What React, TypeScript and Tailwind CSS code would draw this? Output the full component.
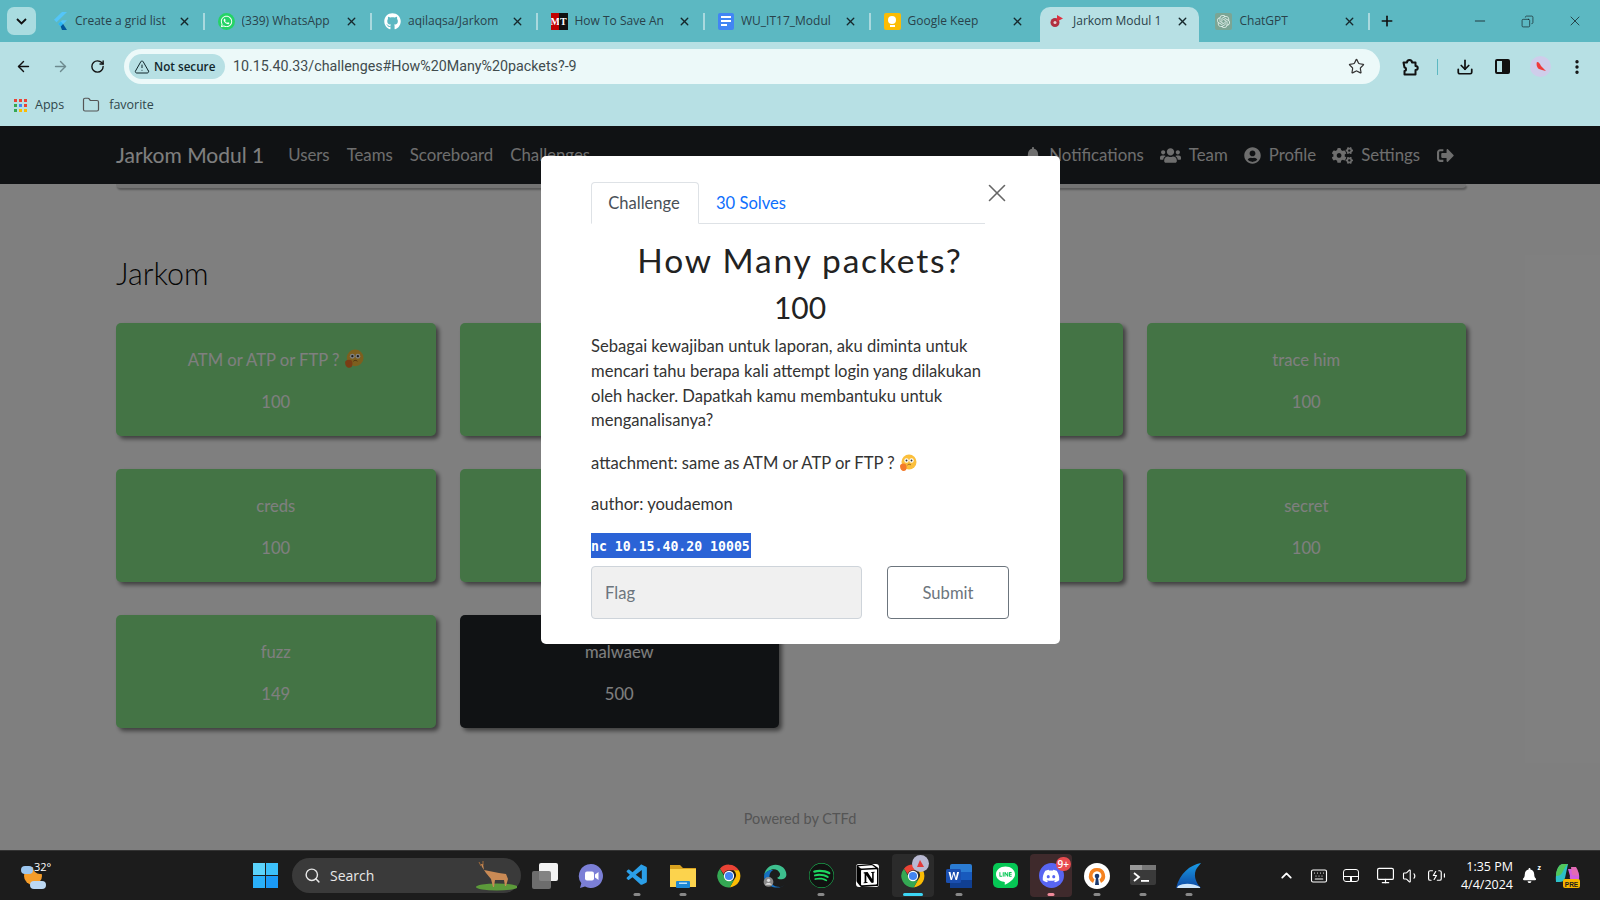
import React from "react";
import { ArrowLeft, ArrowRight, RotateCw, TriangleAlert, Star, Download, MoreVertical, Folder, X, Plus, Minus, Copy, Search, ChevronUp, Keyboard, Volume1, Monitor, BatteryCharging } from "lucide-react";
import { FaBell, FaUsers, FaUserCircle, FaCogs, FaSignOutAlt, FaWhatsapp, FaGithub, FaDiscord, FaSpotify } from "react-icons/fa";
import { SiOpenai, SiNotion, SiLine } from "react-icons/si";
import { VscVscode } from "react-icons/vsc";

const Flutter = () => (
  <svg width="16" height="18" viewBox="0 0 16 18"><path d="M10 0h5L4.5 10.2 2 7.8z" fill="#54c5f8" /><path d="M15 8.3h-5L6.2 12l2.5 2.5z" fill="#54c5f8" /><path d="M6.2 12l2.5-2.4 2.4 2.4-2.4 2.5z" fill="#29b6f6" /><path d="M8.700 14.500L10 18h5l-3.900-6z" fill="#01579b" /></svg>
);
const Wa = () => <span className="w-[17px] h-[17px] rounded-full bg-[#25d366] flex items-center justify-center text-white"><FaWhatsapp size={13} /></span>;
const Gh = () => <span className="w-[17px] h-[17px] rounded-full bg-[#5cb8c2] flex items-center justify-center text-white"><FaGithub size={17} /></span>;
const Mt = () => (
  <span className="w-[17px] h-[17px] flex overflow-hidden text-[10px] font-bold text-white leading-[17px] text-center" style={{ fontFamily: '"Liberation Serif", serif' }}>
    <span className="w-[8.500px] bg-[#c00000]">M</span><span className="w-[8.500px] bg-[#111]">T</span>
  </span>
);
const Docs = () => (
  <span className="w-[16px] h-[17px] rounded-[2px] bg-[#4285f4] flex flex-col justify-center gap-[2px] pl-[3px]">
    <span className="w-[10px] h-[2px] bg-white" /><span className="w-[10px] h-[2px] bg-white" /><span className="w-[6px] h-[2px] bg-white" />
  </span>
);
const Keep = () => (
  <span className="w-[17px] h-[17px] rounded-[2px] bg-[#fbbc04] flex flex-col items-center justify-center gap-[1px]">
    <span className="w-[8px] h-[8px] rounded-full bg-white" /><span className="w-[5px] h-[2px] bg-white" />
  </span>
);
const Ctfd = () => (
  <svg width="16" height="16" viewBox="0 0 16 16"><circle cx="6" cy="9.500" r="4.500" fill="#b03040" /><path d="M8 2l6 3.500-6 3z" fill="#e03040" /><circle cx="6" cy="9.500" r="1.500" fill="#e8d0d0" /></svg>
);
const Gpt = () => <span className="w-[17px] h-[17px] rounded-[2px] bg-[#7ba594] flex items-center justify-center text-[#dfeee9]"><SiOpenai size={13} /></span>;
const Ext = () => (
  <svg width="18" height="18" viewBox="0 0 18 18" className="ml-[21px] shrink-0" fill="none" stroke="#111" strokeWidth="2" strokeLinejoin="round">
    <path d="M2.500 4.500h3.500c0-3.500 5-3.500 5 0h3.500v3.500c3 0 3 4 0 4v4.500h-11v-3.500c2 0 2-3.500 0-3.500z" />
  </svg>
);

const tabs = [
  { t: "Create a grid list", i: <Flutter />, sep: true },
  { t: "(339) WhatsApp", i: <Wa />, sep: true },
  { t: "aqilaqsa/Jarkom", i: <Gh />, sep: true },
  { t: "How To Save An", i: <Mt />, sep: true },
  { t: "WU_IT17_Modul", i: <Docs />, sep: true },
  { t: "Google Keep", i: <Keep />, sep: false },
];

function Tab({ t, i, sep }: { t: string; i: React.ReactNode; sep: boolean }) {
  return (
    <div className="w-[166.500px] h-[42px] flex items-center pl-[10px] shrink-0">
      <span className="w-[17px] h-[18px] flex items-center justify-center shrink-0">{i}</span>
      <span className="w-[92px] ml-[7px] text-[12px] text-[#29424a] whitespace-nowrap overflow-hidden">{t}</span>
      <X size={13} strokeWidth={2.500} className="ml-[11px] text-[#16282c] shrink-0" />
      {sep ? <span className="ml-[12px] w-[2px] h-[17px] bg-[#a9d9de] shrink-0" /> : null}
    </div>
  );
}

const Chrome = ({ s = 26 }: { s?: number }) => (
  <svg width={s} height={s} viewBox="0 0 48 48">
    <path d="M24 3a21 21 0 0 1 18.200 10.500H24a10.500 10.500 0 0 0-9.900 7L7.300 10.700A21 21 0 0 1 24 3z" fill="#ea4335" />
    <path d="M42.200 13.500A21 21 0 0 1 25.300 45l8.900-15.500a10.500 10.500 0 0 0-2-16z" fill="#fbbc04" />
    <path d="M25.300 45A21 21 0 0 1 7.300 10.700l9 15.700A10.500 10.500 0 0 0 34.200 29.500z" fill="#34a853" />
    <circle cx="24" cy="24" r="9.500" fill="#fff" /><circle cx="24" cy="24" r="7.500" fill="#4285f4" />
  </svg>
);
const Edge = () => (
  <svg width="26" height="26" viewBox="0 0 48 48">
    <path d="M4 22C6 10 15 3 25 3c11 0 20 8 20 18 0 6-5 9-10 9-3 0-6-1-7-3 5-1 6-5 5-8-2-6-9-9-15-7C12 14 7 17 4 22z" fill="#3dbf8e" />
    <path d="M4 22c2-6 10-10 17-9-7 3-9 12-6 20 2 6 8 10 14 11 5 1 10-1 13-4-4 4-11 6-18 5C12 44 2 33 4 22z" fill="#1570c0" />
    <circle cx="12" cy="35" r="9" fill="#8a8a8a" /><circle cx="12" cy="32" r="3" fill="#ddd" /><path d="M6 40c1-4 11-4 12 0z" fill="#ddd" />
  </svg>
);
const Explorer = () => (
  <svg width="26" height="26" viewBox="0 0 26 26">
    <path d="M0 2h10l3 3h13v19H0z" fill="#d9a21f" /><rect y="6" width="26" height="18" fill="#fcd34d" /><rect x="6" y="18" width="14" height="7" rx="1" fill="#1e88d4" /><rect x="9" y="19.500" width="8" height="1.500" fill="#bde3fb" />
  </svg>
);
const Word = () => (
  <svg width="26" height="26" viewBox="0 0 26 26">
    <rect x="4" y="1" width="22" height="24" rx="2" fill="#2b7cd3" /><rect x="4" y="9" width="22" height="8" fill="#185abd" /><rect x="4" y="17" width="22" height="8" fill="#103f91" /><rect y="6" width="15" height="14" rx="1.500" fill="#1a4fb0" />
    <path d="M2.500 9h2l1.200 6 1.400-6h1.400l1.400 6 1.200-6h2l-2.100 8H9.500L7.700 11 6 17H4.600z" fill="#fff" />
  </svg>
);
const Meet = () => (
  <svg width="26" height="26" viewBox="0 0 26 26">
    <path d="M13 1a12 12 0 1 1-6 22.400L2 25l1.300-4.800A12 12 0 0 1 13 1z" fill="#7b7fd6" /><rect x="7" y="8.500" width="9" height="9" rx="2" fill="#fff" /><path d="M17 11.500l3.500-2.500v8L17 14.500z" fill="#fff" />
  </svg>
);
const OpenVpn = () => (
  <svg width="26" height="26" viewBox="0 0 26 26">
    <circle cx="13" cy="13" r="13" fill="#fff" /><path d="M13 5a8 8 0 0 0-4 15l1.500-3.500A4.500 4.500 0 1 1 15.500 16.500L17 20a8 8 0 0 0-4-15z" fill="#f58220" /><circle cx="13" cy="13" r="2.300" fill="#1c3a70" /><path d="M12 14h2l1 8h-4z" fill="#1c3a70" />
  </svg>
);
const Term = () => (
  <svg width="26" height="22" viewBox="0 0 26 22">
    <rect width="26" height="20" rx="2" fill="#3a3a3a" /><rect width="26" height="5" fill="#777" /><rect x="0" y="0" width="12" height="5" fill="#999" /><path d="M4 8l5 4-5 4" stroke="#fff" strokeWidth="1.800" fill="none" /><rect x="11" y="15" width="8" height="1.800" fill="#fff" />
  </svg>
);
const Shark = () => (
  <svg width="26" height="28" viewBox="0 0 26 28">
    <defs><linearGradient id="fin" x1="0" y1="0" x2="0" y2="1"><stop offset="0" stopColor="#1a9de8" /><stop offset="1" stopColor="#0d47a1" /></linearGradient></defs>
    <path d="M25 1C14 3 4 11 0 26h25c-6-6-8-14-4-20z" fill="url(#fin)" /><path d="M2 24c6-3 14-3 22 1v1H1z" fill="#cfe6fb" />
  </svg>
);
const Deer = () => (
  <svg width="44" height="30" viewBox="0 0 44 30">
    <ellipse cx="24" cy="26" rx="21" ry="3.500" fill="#5c9a3a" />
    <path d="M8 3l2 0 1 6 15 3 7 1 2 5-2 7h-1l-1-6-9 0-1 7h-1l-2-8-5-6-4-6z" fill="#c98a55" /><path d="M6 1l2 4M10 0l0 4" stroke="#a06a3a" strokeWidth="1" />
  </svg>
);
const Copilot = () => (
  <svg width="26" height="26" viewBox="0 0 26 26">
    <path d="M8 1h5l-3 14c-1 3-3 4-5 4H1C0 10 3 1 8 1z" fill="#2dc0c8" /><path d="M8 1h5c-3 2-4 6-6 9-1 2-3 3-6 3 0-6 3-12 7-12z" fill="#52c65a" /><path d="M13 6h6c4 0 6 5 5 11h-5c-3 0-5-1-4-4z" fill="#d35ee0" /><path d="M16 4h5c2 3 3 6 2 9l-6-1z" fill="#e26bb5" />
    <rect x="8" y="16" width="17" height="9" rx="2" fill="#f5b400" /><text x="16.500" y="23.500" fontSize="6.500" fontWeight="700" textAnchor="middle" fill="#1c1c1c" style={{ fontFamily: '"Liberation Sans", sans-serif' }}>PRE</text>
  </svg>
);
const Emoji = ({ s = 18 }: { s?: number }) => (
  <svg width={s} height={s} viewBox="0 0 18 18" className="inline-block align-[-3px]">
    <circle cx="10" cy="8" r="7.500" fill="#fbbf3c" /><circle cx="7.500" cy="6.500" r="2.200" fill="#fff" /><circle cx="12.500" cy="6.500" r="2.200" fill="#fff" /><circle cx="7.500" cy="6.500" r="1" fill="#333" /><circle cx="12.500" cy="6.500" r="1" fill="#333" /><path d="M8.500 11c1-1 2.500-1 3.500 0" stroke="#8a5a20" strokeWidth="0.900" fill="none" />
    <path d="M1 12c0-2 3-3 5-2 2 .5 2 4 1 6-2 2-6 1-6-4z" fill="#f47a2a" />
  </svg>
);

const Nav = ({ children }: { children: React.ReactNode }) => <span className="flex items-center gap-[8px] text-[#dcdcdc]">{children}</span>;

function Card({ t, v, dark = false }: { t?: React.ReactNode; v?: string; dark?: boolean }) {
  return (
    <div className={`h-[113px] rounded-[5px] flex flex-col items-center text-[16.600px] pt-[25px] shadow-[3px_3px_4px_rgba(0,0,0,0.5)] ${dark ? "bg-[#212529] text-[#ffffff]" : "bg-[#88e88a] text-[#ffffff]"}`}>
      <div className="h-[24px] leading-[24px]">{t}</div>
      <div className="h-[24px] leading-[24px] mt-[18px]">{v}</div>
    </div>
  );
}

const Dock = ({ children, dot, active, tint }: { children: React.ReactNode; dot?: string; active?: boolean; tint?: string }) => (
  <div className={`relative w-[42px] h-[43px] mx-[2px] rounded-[4px] flex items-center justify-center shrink-0 ${active ? "bg-[#2b2b2b]" : ""} ${tint ?? ""}`}>
    {children}
    {dot ? <span className={`absolute bottom-[1px] left-1/2 -translate-x-1/2 h-[3px] rounded-full ${dot}`} /> : null}
  </div>
);

export default function App() {
  return (
    <div className="w-[1600px] h-[900px] flex flex-col overflow-hidden bg-white" style={{ fontFamily: 'Lato, sans-serif' }}>
      {/* tab strip */}
      <div className="h-[42px] bg-[#5cb8c2] flex items-center shrink-0" style={{ fontFamily: '"Open Sans", sans-serif' }}>
        <div className="ml-[7px] w-[29px] h-[28px] rounded-[7px] bg-[#a9dce0] flex items-center justify-center mr-[5px] shrink-0">
          <svg width="11" height="7" viewBox="0 0 11 7"><path d="M1 1l4.500 4.500L10 1" stroke="#111" strokeWidth="1.800" fill="none" /></svg>
        </div>
        {tabs.map((t) => <Tab key={t.t} {...t} />)}
        <div className="w-[159px] h-[35px] self-end bg-[#b7e0e4] rounded-t-[10px] flex items-center pl-[9px] pb-[7px] mr-[7.500px] shrink-0">
          <Ctfd />
          <span className="ml-[8px] w-[91px] text-[12px] text-[#29424a] whitespace-nowrap">Jarkom Modul 1</span>
          <X size={13} strokeWidth={2.500} className="ml-[12px] text-[#16282c]" />
        </div>
        <div className="h-[42px] flex items-center pl-[8px] shrink-0">
          <Gpt />
          <span className="ml-[8px] w-[84px] text-[12px] text-[#29424a]">ChatGPT</span>
          <X size={13} strokeWidth={2.500} className="ml-[19px] text-[#16282c]" />
          <span className="ml-[12px] w-[2px] h-[17px] bg-[#a9d9de]" />
          <Plus size={16} strokeWidth={2.500} className="ml-[9px] text-[#111]" />
        </div>
        <div className="ml-auto flex items-center pr-[17px] gap-[33px] text-[#18282c]">
          <Minus size={16} strokeWidth={1.300} />
          <Copy size={13} strokeWidth={1.300} className="-scale-x-100" />
          <X size={16} strokeWidth={1.200} />
        </div>
      </div>
      {/* toolbar */}
      <div className="h-[42px] bg-[#b7e0e4] flex items-center shrink-0 pt-[7px]" style={{ fontFamily: '"Open Sans", sans-serif' }}>
        <ArrowLeft size={17} strokeWidth={2} className="ml-[15px] text-[#111]" />
        <ArrowRight size={17} strokeWidth={2} className="ml-[20px] text-[#6d8a8e]" />
        <RotateCw size={15} strokeWidth={2.200} className="ml-[21px] text-[#111]" />
        <div className="ml-[19px] w-[1256px] h-[35px] shrink-0 rounded-full bg-[#ecf9f9] flex items-center pl-[5px] pr-[15px]">
          <div className="h-[25px] w-[96px] rounded-full bg-[#b7e0e4] flex items-center pl-[5px] gap-[4px] text-[11.700px] font-semibold text-[#10262b] whitespace-nowrap">
            <TriangleAlert size={16} strokeWidth={1.500} className="shrink-0" />Not secure
          </div>
          <span className="ml-[8px] text-[14.250px] text-[#414c4e] whitespace-nowrap" style={{ fontFamily: 'Roboto, sans-serif' }}>10.15.40.33/challenges#How%20Many%20packets?-9</span>
          <Star size={17} strokeWidth={1.700} className="ml-auto text-[#333]" />
        </div>
        <Ext />
        <span className="ml-[18px] w-[1px] h-[16px] bg-[#5cb8c2]" />
        <Download size={18} strokeWidth={2.300} className="ml-[18px] text-[#111]" />
        <span className="ml-[21px] w-[15px] h-[15px] border-2 border-[#111] rounded-[2px] flex justify-end"><span className="w-[6px] h-full bg-[#111]" /></span>
        <span className="ml-[20px] w-[21px] h-[21px] rounded-full bg-[#cfcdea] flex items-center justify-center">
          <svg width="12" height="12" viewBox="0 0 12 12"><path d="M2 1c2 0 3 2 4 4l5 5-4-1-3-1C2 7 1 3 2 1z" fill="#ef3a3a" /></svg>
        </span>
        <MoreVertical size={18} strokeWidth={2.500} className="ml-[17px] text-[#111]" />
      </div>
      {/* bookmarks */}
      <div className="h-[42px] bg-[#b7e0e4] flex items-center shrink-0 text-[12.500px] text-[#30474c]" style={{ fontFamily: '"Open Sans", sans-serif' }}>
        <div className="ml-[14px] grid grid-cols-3 gap-[2px]">
          {["#ea4335", "#ea4335", "#ea4335", "#34a853", "#4285f4", "#ea4335", "#34a853", "#fbbc04", "#fbbc04"].map((c, i) => <span key={i} className="w-[3px] h-[3px]" style={{ backgroundColor: c }} />)}
        </div>
        <span className="ml-[8px]">Apps</span>
        <Folder size={18} strokeWidth={1.600} className="ml-[18px] text-[#555]" />
        <span className="ml-[9px]">favorite</span>
      </div>
      {/* page */}
      <div className="relative flex-1 flex flex-col min-h-0 bg-white">
        <div className="h-[58px] bg-[#212529] flex items-center pl-[116px] pr-[146px] text-[16.800px] shrink-0">
          <span className="text-[21px] text-white">Jarkom Modul 1</span>
          <div className="ml-[24px] flex gap-[17px] text-[#dcdcdc]">
            <span>Users</span><span>Teams</span><span>Scoreboard</span><span>Challenges</span>
          </div>
          <div className="ml-auto flex items-center gap-[16px]">
            <Nav><FaBell size={16} />Notifications</Nav>
            <Nav><FaUsers size={21} />Team</Nav>
            <Nav><FaUserCircle size={17} />Profile</Nav>
            <Nav><FaCogs size={21} />Settings</Nav>
            <span className="ml-[1px]"><Nav><FaSignOutAlt size={17} /></Nav></span>
          </div>
        </div>
        <div className="ml-[116px] mr-[134px] h-[4px] rounded-b-[4px] bg-[#e6e6e6] shadow-[1px_2px_2px_rgba(0,0,0,0.3)]" />
        <div className="pl-[116px] pr-[134px] flex-1 flex flex-col">
          <h2 className="mt-[65px] h-[40px] leading-[40px] text-[30.500px] font-light text-[#0a0a0a]">Jarkom</h2>
          <div className="mt-[30px] grid grid-cols-4 gap-x-[24px] gap-y-[33px]">
            <Card t={<>ATM or ATP or FTP ? <Emoji s={20} /></>} v="100" />
            <Card />
            <Card />
            <Card t="trace him" v="100" />
            <Card t="creds" v="100" />
            <Card />
            <Card />
            <Card t="secret" v="100" />
            <Card t="fuzz" v="149" />
            <Card t="malwaew" v="500" dark />
          </div>
          <div className="mt-[80px] text-center text-[14.500px] text-[#aaaaaa] pl-[18px]">Powered by CTFd</div>
        </div>
        {/* dim */}
        <div className="absolute inset-0 bg-black/50" />
        {/* modal */}
        <div className="absolute top-[30px] left-[541px] w-[519px] h-[488px] bg-white rounded-[5px] pt-[26px] pl-[50px] text-[#212529] text-[16.600px]">
          <X size={30} strokeWidth={1.300} className="absolute top-[22px] left-[441px] text-[#666]" />
          <div className="w-[394px] h-[42px] border-b border-[#dee2e6] flex">
            <div className="w-[108px] h-[42px] border border-[#dee2e6] border-b-white rounded-t-[4px] flex items-center justify-center text-[#495057] pr-[2px]">Challenge</div>
            <div className="ml-[17px] h-[42px] flex items-center text-[#0d6efd]">30 Solves</div>
          </div>
          <div className="w-[418px]">
            <h3 className="mt-[14px] h-[44px] leading-[44px] text-center text-[33.500px] tracking-[1.800px] text-[#222]">How Many packets?</h3>
            <div className="mt-[3px] h-[44px] leading-[44px] text-center text-[30px] text-[#222]">100</div>
            <p className="mt-[5px] leading-[24.800px] text-[#333]">Sebagai kewajiban untuk laporan, aku diminta untuk mencari tahu berapa kali attempt login yang dilakukan oleh hacker. Dapatkah kamu membantuku untuk menganalisanya?</p>
            <p className="mt-[18px] leading-[24.800px] text-[#333]">attachment: same as ATM or ATP or FTP ? <Emoji /></p>
            <p className="mt-[16px] leading-[24.800px] text-[#333]">author: youdaemon</p>
            <div className="mt-[16px] h-[25px] leading-[27px] w-[160px] bg-[#2b63d6] text-white text-[13.200px] font-bold whitespace-nowrap overflow-hidden" style={{ fontFamily: '"DejaVu Sans Mono", monospace' }}>nc 10.15.40.20 10005</div>
            <div className="mt-[8px] flex justify-between">
              <div className="w-[271px] h-[53px] rounded-[4px] bg-[#f0f0f0] border border-[#ced4da] flex items-center pl-[13px] pt-[2px] text-[#6c757d]">Flag</div>
              <div className="w-[122px] h-[53px] rounded-[4px] border border-[#6c757d] flex items-center justify-center pt-[2px] text-[#6c757d]">Submit</div>
            </div>
          </div>
        </div>
      </div>
      {/* taskbar */}
      <div className="h-[50px] bg-[#1c1c1c] border-t border-[#333] flex items-center shrink-0 relative" style={{ fontFamily: '"Open Sans", sans-serif' }}>
        <div className="relative ml-[21px] w-[30px] h-[30px] shrink-0">
          <span className="absolute left-[3px] top-[6px] w-[18px] h-[18px] rounded-full bg-[#f59d2a]" />
          <span className="absolute left-0 top-[5px] w-[12px] h-[8px] rounded-full bg-[#9cc6ef]" />
          <span className="absolute left-[9px] top-[20px] w-[16px] h-[8px] rounded-full bg-[#bcd8f3]" />
          <span className="absolute left-[12px] -top-[1px] text-[11px] text-white bg-[#1c1c1c] rounded-full px-[1px] leading-[14px]">32°</span>
        </div>
        <div className="ml-[202px] grid grid-cols-2 gap-[1px] w-[25px] h-[25px] shrink-0">
          {["#5bd3fb", "#3cc0fa", "#2ab0f9", "#1a9af7"].map((c) => <span key={c} style={{ backgroundColor: c }} />)}
        </div>
        <div className="ml-[14px] w-[229px] h-[35px] rounded-full bg-[#3a3a3a] flex items-center pl-[12px] text-[14px] text-[#e8e8e8] shrink-0">
          <Search size={17} strokeWidth={2} />
          <span className="ml-[9px]">Search</span>
          <span className="ml-auto mr-[4px]"><Deer /></span>
        </div>
        <div className="ml-[1px] flex items-center shrink-0">
          <Dock>
            <span className="relative w-[26px] h-[26px]"><span className="absolute right-0 top-0 w-[19px] h-[18px] rounded-[2px] bg-[#f2f2f2]" /><span className="absolute left-0 bottom-0 w-[19px] h-[18px] rounded-[2px] bg-[#777]/90" /></span>
          </Dock>
          <Dock><Meet /></Dock>
          <Dock dot="w-[7px] bg-[#888]"><VscVscode size={25} className="text-[#2b9fe8]" /></Dock>
          <Dock dot="w-[7px] bg-[#888]"><Explorer /></Dock>
          <Dock><Chrome /></Dock>
          <Dock><Edge /></Dock>
          <Dock dot="w-[7px] bg-[#888]"><span className="w-[25px] h-[25px] rounded-full bg-[#1ed760] flex items-center justify-center"><FaSpotify size={25} className="text-[#111]" /></span></Dock>
          <Dock><span className="w-[23px] h-[23px] bg-white rounded-[3px] flex items-center justify-center text-black"><SiNotion size={23} /></span></Dock>
          <Dock active dot="w-[20px] bg-[#3cd6f5]">
            <Chrome />
            <span className="absolute top-[1px] right-[5px] w-[17px] h-[17px] rounded-full bg-[#b9b9d2] flex items-center justify-center"><svg width="9" height="9" viewBox="0 0 9 9"><path d="M1 8l3-7 4 7z" fill="#e23a3a" /></svg></span>
          </Dock>
          <Dock dot="w-[7px] bg-[#888]"><Word /></Dock>
          <Dock><span className="w-[25px] h-[25px] rounded-[5px] bg-[#06c755] flex items-center justify-center text-white"><SiLine size={19} /></span></Dock>
          <Dock tint="bg-[#3f2a2c]" dot="w-[7px] bg-[#f08a9a]">
            <span className="w-[25px] h-[25px] rounded-full bg-[#5865f2] flex items-center justify-center text-white"><FaDiscord size={18} /></span>
            <span className="absolute top-[3px] right-[1px] h-[14px] px-[2px] rounded-full bg-[#e84c50] text-white text-[10px] leading-[14px] font-semibold">9+</span>
          </Dock>
          <Dock dot="w-[7px] bg-[#888]"><OpenVpn /></Dock>
          <Dock dot="w-[7px] bg-[#888]"><Term /></Dock>
          <Dock dot="w-[7px] bg-[#888]"><Shark /></Dock>
        </div>
        <div className="ml-[66px] flex items-center text-white shrink-0">
          <ChevronUp size={17} strokeWidth={2.500} />
          <Keyboard size={18} strokeWidth={1.500} className="ml-[15px]" />
          <span className="ml-[15px] w-[16px] h-[13px] rounded-[3px] border-[1.500px] border-white flex flex-col justify-end"><span className="h-[5px] border-t-[1.500px] border-white flex justify-center"><span className="w-[1.500px] h-full bg-white" /></span></span>
          <Monitor size={19} strokeWidth={1.500} className="ml-[17px]" />
          <Volume1 size={18} strokeWidth={1.500} className="ml-[7px]" />
          <BatteryCharging size={19} strokeWidth={1.500} className="ml-[7px]" />
          <div className="ml-[9px] w-[58px] text-right text-[12.500px] leading-[18px] whitespace-nowrap"><div>1:35 PM</div><div>4/4/2024</div></div>
          <span className="relative ml-[9px] w-[16px] h-[19px] flex items-center"><FaBell size={15} /><span className="absolute -top-[3px] right-[-3px] text-[7px] font-bold">z</span></span>
          <span className="ml-[17px]"><Copilot /></span>
        </div>
      </div>
    </div>
  );
}
